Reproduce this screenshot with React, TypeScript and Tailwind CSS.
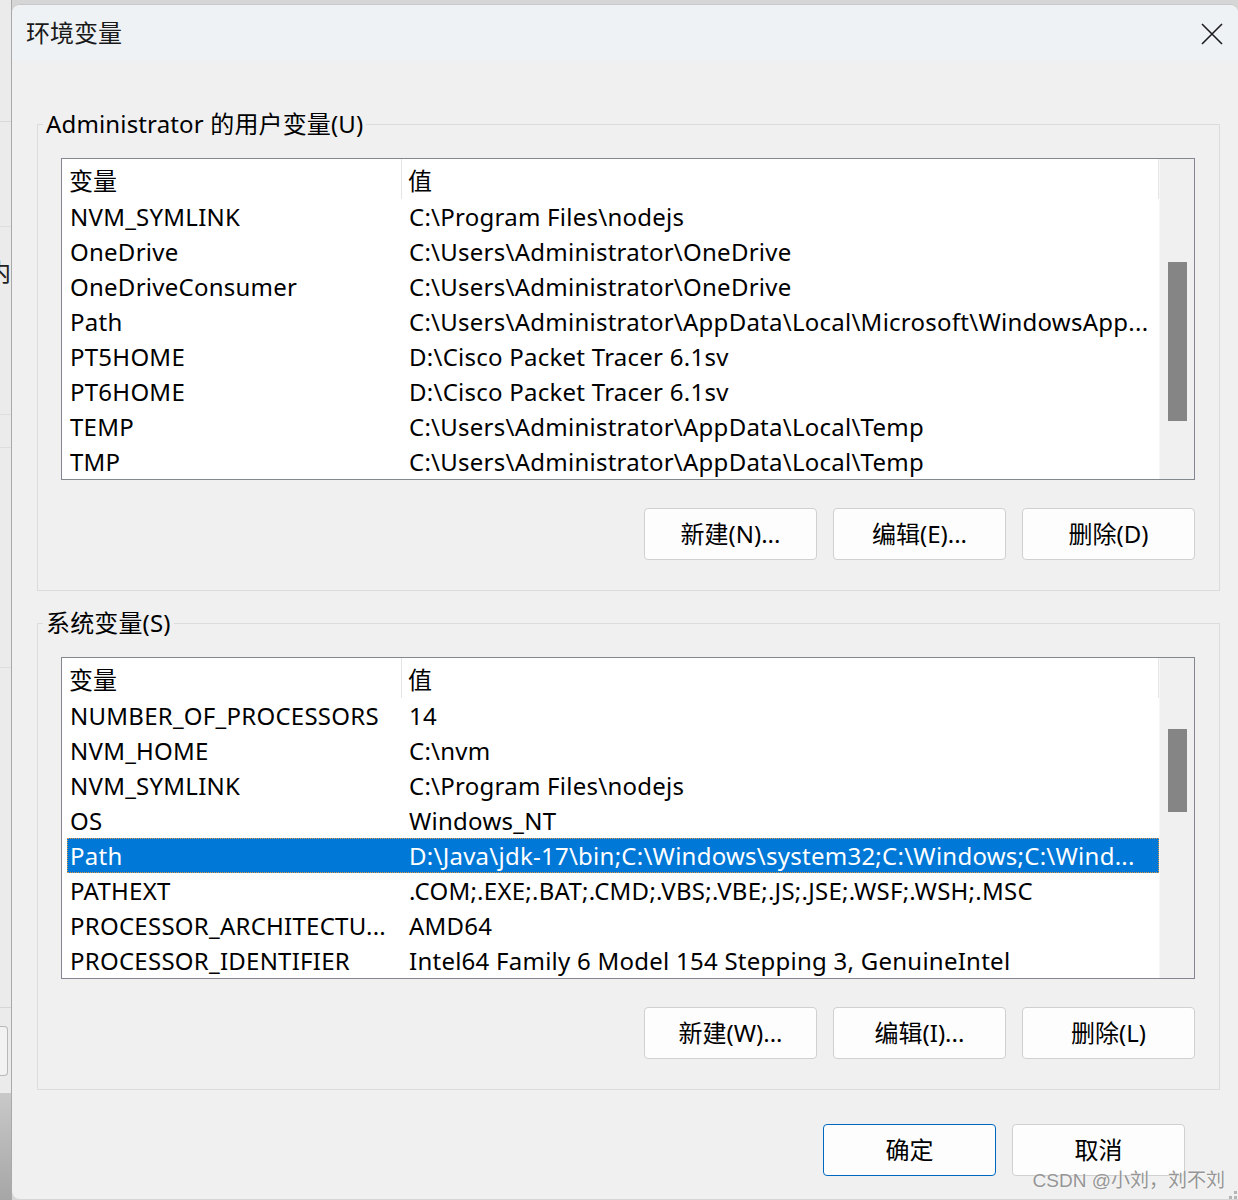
import React from 'react';

type row = { name: string; value: string };

const userVars: row[] = [
  { name: 'NVM_SYMLINK', value: 'C:\\Program Files\\nodejs' },
  { name: 'OneDrive', value: 'C:\\Users\\Administrator\\OneDrive' },
  { name: 'OneDriveConsumer', value: 'C:\\Users\\Administrator\\OneDrive' },
  { name: 'Path', value: 'C:\\Users\\Administrator\\AppData\\Local\\Microsoft\\WindowsApp...' },
  { name: 'PT5HOME', value: 'D:\\Cisco Packet Tracer 6.1sv' },
  { name: 'PT6HOME', value: 'D:\\Cisco Packet Tracer 6.1sv' },
  { name: 'TEMP', value: 'C:\\Users\\Administrator\\AppData\\Local\\Temp' },
  { name: 'TMP', value: 'C:\\Users\\Administrator\\AppData\\Local\\Temp' },
];

const systemVars: row[] = [
  { name: 'NUMBER_OF_PROCESSORS', value: '14' },
  { name: 'NVM_HOME', value: 'C:\\nvm' },
  { name: 'NVM_SYMLINK', value: 'C:\\Program Files\\nodejs' },
  { name: 'OS', value: 'Windows_NT' },
  { name: 'Path', value: 'D:\\Java\\jdk-17\\bin;C:\\Windows\\system32;C:\\Windows;C:\\Wind...' },
  { name: 'PATHEXT', value: '.COM;.EXE;.BAT;.CMD;.VBS;.VBE;.JS;.JSE;.WSF;.WSH;.MSC' },
  { name: 'PROCESSOR_ARCHITECTU...', value: 'AMD64' },
  { name: 'PROCESSOR_IDENTIFIER', value: 'Intel64 Family 6 Model 154 Stepping 3, GenuineIntel' },
];

function Button({ label, primary }: { label: string; primary?: boolean }) {
  return (
    <button
      className={
        'w-[173px] h-[52px] rounded-[4px] bg-[#fdfdfd] text-[24px] text-black flex items-center justify-center ' +
        (primary ? 'border border-[#0067c0]' : 'border border-[#d0d0d0]')
      }
    >
      {label}
    </button>
  );
}

function VarList({ rows, selected, thumbTop, thumbHeight }: { rows: row[]; selected?: number; thumbTop: string; thumbHeight: string }) {
  return (
    <div className="w-[1134px] h-[322px] border border-[#828790] bg-white flex">
      <div className="flex-1 flex flex-col">
        {/* header */}
        <div className="h-[40px] flex text-[24px] leading-[35px]">
          <div className="w-[340px] pl-[7px] pt-[4px] border-r border-[#e5e5e5]">变量</div>
          <div className="flex-1 pl-[6px] pt-[4px] border-r border-[#e5e5e5]">值</div>
        </div>
        {rows.map((r, i) => {
          const sel = i === selected;
          return (
            <div key={i} className="h-[35px] pl-[5px]">
              <div
                className={
                  'h-[35px] flex text-[24px] leading-[33px] tracking-[0.25px] whitespace-nowrap border border-dotted ' +
                  (sel ? 'bg-[#0078d7] text-white border-[#d9954a]' : 'text-black border-transparent')
                }
              >
                <div className="w-[335px] pl-[2px] overflow-hidden">{r.name}</div>
                <div className="flex-1 pl-[6px] overflow-hidden">{r.value}</div>
              </div>
            </div>
          );
        })}
      </div>
      <div className="w-[35px] bg-[#f0f0f0] border-l border-[#f7f7f7] px-[8px]">
        <div className={'w-[19px] bg-[#858585] ' + thumbTop + ' ' + thumbHeight}></div>
      </div>
    </div>
  );
}

function GroupBox({ title, children }: { title: string; children: React.ReactNode }) {
  return (
    <fieldset className="ml-[25px] w-[1183px] border border-[#dcdcdc]">
      <legend className="ml-[5px] px-[3px] text-[24px] leading-[32px] tracking-[0.15px] text-black">{title}</legend>
      <div className="pl-[23px] pr-[24px] pt-[18px] pb-[30px]">{children}</div>
    </fieldset>
  );
}

function BackWindow() {
  // sliver of the window behind the dialog
  return (
    <div className="w-[12px] shrink-0 h-full flex flex-col bg-[#ebebeb] border-r border-[#a9a9a9] overflow-hidden">
      <div className="h-[122px] shrink-0 border-b border-[#d9d9d9]"></div>
      <div className="h-[105px] shrink-0 border-b border-[#dedede]"></div>
      <div className="h-[60px] shrink-0 text-[24px] leading-[30px] text-[#222] -ml-[13px] pt-[30px] whitespace-nowrap">内</div>
      <div className="h-[128px] shrink-0 border-b border-[#dedede]"></div>
      <div className="h-[33px] shrink-0 border-b border-[#dedede]"></div>
      <div className="h-[220px] shrink-0 border-b border-[#dedede]"></div>
      <div className="h-[340px] shrink-0 border-b border-[#d6d6d6]"></div>
      <div className="h-[18px] shrink-0"></div>
      <div className="h-[50px] shrink-0 w-[8px] border border-l-0 border-[#b8b8b8] rounded-r-[4px] bg-[#f2f2f2]"></div>
      <div className="h-[17px] shrink-0"></div>
      <div className="flex-1 bg-gradient-to-b from-[#c9c9c9] to-[#a6a6a6]"></div>
    </div>
  );
}

export default function App() {
  return (
    <div className="relative w-[1238px] h-[1200px] flex bg-[#d6d6d6] overflow-hidden font-['Noto_Sans','Noto_Sans_CJK_SC',sans-serif]">
      <BackWindow />
      <div className="flex-1 mt-[4px] mb-[1px] rounded-t-[8px] rounded-bl-[8px] border-t border-[#c8c8c8] bg-[#f0f0f0] flex flex-col">
        {/* title bar */}
        <div className="h-[56px] shrink-0 rounded-t-[8px] bg-[#eef2f5] flex items-center justify-between pl-[14px] pr-[15px]">
          <span className="text-[24px] leading-[32px] text-[#1a1a1a]">环境变量</span>
          <svg width="22" height="22" viewBox="0 0 22 22" className="mt-[1px]">
            <path d="M1 1 L21 21 M21 1 L1 21" stroke="#1c1c1c" strokeWidth="1.6" fill="none" />
          </svg>
        </div>

        <div className="mt-[47px]">
          <GroupBox title="Administrator 的用户变量(U)">
            <VarList rows={userVars} thumbTop="mt-[103px]" thumbHeight="h-[159px]" />
            <div className="mt-[28px] flex justify-end gap-[16px]">
              <Button label="新建(N)..." />
              <Button label="编辑(E)..." />
              <Button label="删除(D)" />
            </div>
          </GroupBox>
        </div>

        <div className="mt-[16px]">
          <GroupBox title="系统变量(S)">
            <VarList rows={systemVars} selected={4} thumbTop="mt-[71px]" thumbHeight="h-[83px]" />
            <div className="mt-[28px] flex justify-end gap-[16px]">
              <Button label="新建(W)..." />
              <Button label="编辑(I)..." />
              <Button label="删除(L)" />
            </div>
          </GroupBox>
        </div>

        <div className="ml-[25px] w-[1183px] mt-[34px] pr-[35px] flex justify-end gap-[16px]">
          <Button label="确定" primary />
          <Button label="取消" />
        </div>
      </div>

      {/* watermark */}
      <div className="absolute right-[13px] bottom-[7px] text-[19px] leading-[24px] text-[#959595] font-['Liberation_Sans','Noto_Sans_CJK_SC',sans-serif] [text-shadow:0_0_2px_#ffffff]">
        CSDN @小刘，刘不刘
      </div>
      <div className="absolute right-0 bottom-0 grid grid-cols-3 gap-[2px] p-[1px]">
        <span className="w-[3px] h-[3px]"></span>
        <span className="w-[3px] h-[3px]"></span>
        <span className="w-[3px] h-[3px] bg-[#b5b5b5]"></span>
        <span className="w-[3px] h-[3px]"></span>
        <span className="w-[3px] h-[3px] bg-[#b5b5b5]"></span>
        <span className="w-[3px] h-[3px] bg-[#b5b5b5]"></span>
      </div>
    </div>
  );
}
